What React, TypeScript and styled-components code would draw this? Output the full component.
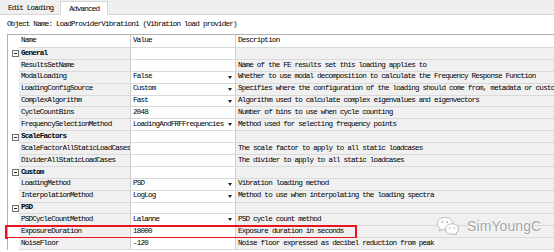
import { createGlobalStyle } from "styled-components";
import styled from "styled-components";

const GlobalStyle = createGlobalStyle`
  html, body {
    margin: 0;
    padding: 0;
    background: #ffffff;
    overflow: hidden;
  }
  body {
    font-family: "Liberation Mono", "Courier New", monospace;
    font-size: 7.6px;
    letter-spacing: -0.79px;
    color: #000;
  }
`;

const Page = styled.div`
  position: relative;
  width: 554px;
  height: 252px;
  display: flex;
  flex-direction: column;
`;

const TabStrip = styled.div`
  height: 14px;
  background: #efefef;
  border-bottom: 1px solid #d6d6d6;
  display: flex;
  align-items: flex-end;
  padding-left: 2px;
`;

const Tab = styled.div<{ active?: boolean }>`
  height: ${p => (p.active ? "14px" : "13px")};
  line-height: ${p => (p.active ? "14px" : "13px")};
  padding: 0 ${p => (p.active ? "8px" : "5px")};
  background: ${p => (p.active ? "#ffffff" : "transparent")};
  border: 1px solid ${p => (p.active ? "#d6d6d6" : "transparent")};
  border-bottom: none;
  margin-bottom: ${p => (p.active ? "-1px" : "0")};
  margin-left: ${p => (p.active ? "1px" : "0")};
  box-sizing: border-box;
  white-space: nowrap;
`;

const ObjectName = styled.div`
  height: 19px;
  line-height: 19px;
  padding-left: 7px;
  white-space: nowrap;
`;

const Table = styled.div`
  margin-left: 7px;
  border-top: 1px solid #b4b4b4;
  border-left: 1px solid #b4b4b4;
  display: flex;
  flex-direction: column;
`;

const Row = styled.div<{ header?: boolean; highlighted?: boolean }>`
  position: relative;
  display: grid;
  grid-template-columns: 11px 112px 105px 1fr;
  height: ${p => (p.header ? "13px" : "11.9px")};
  flex: none;

  ${p =>
    p.highlighted &&
    `
    &::after {
      content: "";
      position: absolute;
      left: -3px;
      top: -1px;
      width: 352px;
      height: 13.5px;
      border: 2px solid #e8161c;
      box-sizing: border-box;
      pointer-events: none;
    }
  `}
`;

const Cell = styled.div<{ tone?: "white" | "grey"; bold?: boolean; divider?: boolean }>`
  box-sizing: border-box;
  border-bottom: 1px solid #dadada;
  border-right: ${p => (p.divider ? "1px solid #d0d0d0" : "none")};
  background: ${p => (p.tone === "grey" ? "#f0f0f0" : "#ffffff")};
  font-weight: ${p => (p.bold ? 700 : 400)};
  padding-left: 2px;
  white-space: nowrap;
  overflow: hidden;
  display: flex;
  align-items: center;
  line-height: 1;
`;

const Gutter = styled.div`
  box-sizing: border-box;
  display: flex;
  align-items: center;
  justify-content: center;
  background: #ffffff;
`;

const Expander = styled.span`
  width: 7px;
  height: 7px;
  border: 1px solid #707070;
  box-sizing: border-box;
  position: relative;
  margin-left: 4px;
  &::before {
    content: "";
    position: absolute;
    left: 1px;
    right: 1px;
    top: 2px;
    height: 1px;
    background: #222;
  }
`;

const ValueText = styled.span`
  flex: 1;
`;

const DropArrow = styled.span`
  width: 0;
  height: 0;
  border-left: 2.5px solid transparent;
  border-right: 2.5px solid transparent;
  border-top: 3px solid #222;
  margin-right: 3px;
`;

const Watermark = styled.div`
  position: absolute;
  left: 436px;
  top: 216px;
  display: flex;
  align-items: center;
  gap: 7px;
  pointer-events: none;
`;

const WatermarkText = styled.span`
  font-family: "Liberation Sans", Arial, sans-serif;
  font-size: 14px;
  letter-spacing: 0.1px;
  color: #a4a4a4;
  text-shadow: 0 0 2px #fff, 0 0 2px #fff, 0 0 1px #fff;
`;

type Prop = {
  kind: "prop";
  name: string;
  value: string;
  drop?: boolean;
  desc: string;
  highlighted?: boolean;
};
type Category = { kind: "cat"; name: string };

const rows: (Prop | Category)[] = [
  { kind: "cat", name: "General" },
  { kind: "prop", name: "ResultsSetName", value: "", desc: "Name of the FE results set this loading applies to" },
  { kind: "prop", name: "ModalLoading", value: "False", drop: true, desc: "Whether to use modal decomposition to calculate the Frequency Response Function" },
  { kind: "prop", name: "LoadingConfigSource", value: "Custom", drop: true, desc: "Specifies where the configuration of the loading should come from, metadata or custom" },
  { kind: "prop", name: "ComplexAlgorithm", value: "Fast", drop: true, desc: "Algorithm used to calculate complex eigenvalues and eigenvectors" },
  { kind: "prop", name: "CycleCountBins", value: "2048", desc: "Number of bins to use when cycle counting" },
  { kind: "prop", name: "FrequencySelectionMethod", value: "LoadingAndFRFFrequencies", drop: true, desc: "Method used for selecting frequency points" },
  { kind: "cat", name: "ScaleFactors" },
  { kind: "prop", name: "ScaleFactorAllStaticLoadCases", value: "", desc: "The scale factor to apply to all static loadcases" },
  { kind: "prop", name: "DividerAllStaticLoadCases", value: "", desc: "The divider to apply to all static loadcases" },
  { kind: "cat", name: "Custom" },
  { kind: "prop", name: "LoadingMethod", value: "PSD", drop: true, desc: "Vibration loading method" },
  { kind: "prop", name: "InterpolationMethod", value: "LogLog", drop: true, desc: "Method to use when interpolating the loading spectra" },
  { kind: "cat", name: "PSD" },
  { kind: "prop", name: "PSDCycleCountMethod", value: "Lalanne", drop: true, desc: "PSD cycle count method" },
  { kind: "prop", name: "ExposureDuration", value: "18000", desc: "Exposure duration in seconds", highlighted: true },
  { kind: "prop", name: "NoiseFloor", value: "-120", desc: "Noise floor expressed as decibel reduction from peak" },
];

const WeChatIcon = () => (
  <svg width="24" height="19" viewBox="0 0 24 19">
    <g fill="#ffffff" stroke="#b8b8b8" strokeWidth="1">
      <path d="M9 1.5c-4.4 0-7.8 2.8-7.8 6.2 0 2 1.1 3.7 2.9 4.9l-.8 2.3 2.7-1.4c.9.3 1.9.4 3 .4 4.4 0 7.8-2.8 7.8-6.2S13.4 1.5 9 1.5z" />
      <path d="M16 7.8c-3.7 0-6.6 2.4-6.6 5.2s2.9 5.2 6.6 5.2c.8 0 1.6-.1 2.3-.3l2.2 1.1-.6-1.9c1.6-1 2.7-2.5 2.7-4.1 0-2.8-2.9-5.2-6.6-5.2z" />
    </g>
    <g fill="#b0b0b0">
      <circle cx="6.3" cy="6" r="0.9" />
      <circle cx="11.3" cy="6" r="0.9" />
      <circle cx="13.8" cy="12" r="0.8" />
      <circle cx="18.2" cy="12" r="0.8" />
    </g>
  </svg>
);

const App = () => {
  return (
    <Page>
      <GlobalStyle />
      <TabStrip>
        <Tab>Edit Loading</Tab>
        <Tab active>Advanced</Tab>
      </TabStrip>
      <ObjectName>Object Name: LoadProviderVibration1 (Vibration load provider)</ObjectName>
      <Table>
        <Row header>
          <Gutter />
          <Cell divider>Name</Cell>
          <Cell divider>Value</Cell>
          <Cell>Description</Cell>
        </Row>
        {rows.map(r =>
          r.kind === "cat" ? (
            <Row key={r.name}>
              <Gutter>
                <Expander />
              </Gutter>
              <Cell tone="grey" bold divider>{r.name}</Cell>
              <Cell divider />
              <Cell tone="grey" />
            </Row>
          ) : (
            <Row key={r.name} highlighted={r.highlighted}>
              <Gutter />
              <Cell tone="grey" divider>{r.name}</Cell>
              <Cell divider>
                <ValueText>{r.value}</ValueText>
                {r.drop && <DropArrow />}
              </Cell>
              <Cell tone="grey">{r.desc}</Cell>
            </Row>
          )
        )}
      </Table>
      <Watermark>
        <WeChatIcon />
        <WatermarkText>SimYoungC</WatermarkText>
      </Watermark>
    </Page>
  );
};

export default App;
